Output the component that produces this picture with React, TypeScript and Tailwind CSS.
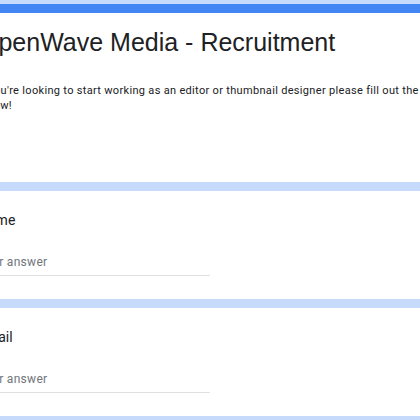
export default function App() {
  return (
    <div className="w-[420px] h-[420px] overflow-hidden bg-[#c6dafc] font-['Roboto',sans-serif]">
      <div className="-ml-[22px] w-[500px] pt-[4px] flex flex-col gap-[9px]">
        {/* header card */}
        <div className="bg-white h-[178px]">
          <div className="h-[9px] bg-[#4285f4]" />
          <div className="pt-[14px]">
            <h1 className="text-[25px] leading-[30px] text-[#202124] font-['Liberation_Sans',sans-serif] ml-[1px]">
              OpenWave Media - Recruitment
            </h1>
            <p className="mt-[26px] text-[11px] leading-[15px] text-[#202124] tracking-[0.32px] w-[480px]">
              If you're looking to start working as an editor or thumbnail designer please fill out the form below!
            </p>
          </div>
        </div>

        {/* question cards */}
        {["Name", "Email"].map((q) => (
          <div key={q} className="bg-white h-[108px] pt-[19px]">
            <div className="text-[14px] leading-[20px] text-[#202124]">{q}</div>
            <div className="mt-[24px] w-[232px] border-b border-[#e0e0e0] pb-[5px] text-[12px] leading-[16px] text-[#70757a] tracking-[0.3px]">
              Your answer
            </div>
          </div>
        ))}
      </div>
    </div>
  );
}
